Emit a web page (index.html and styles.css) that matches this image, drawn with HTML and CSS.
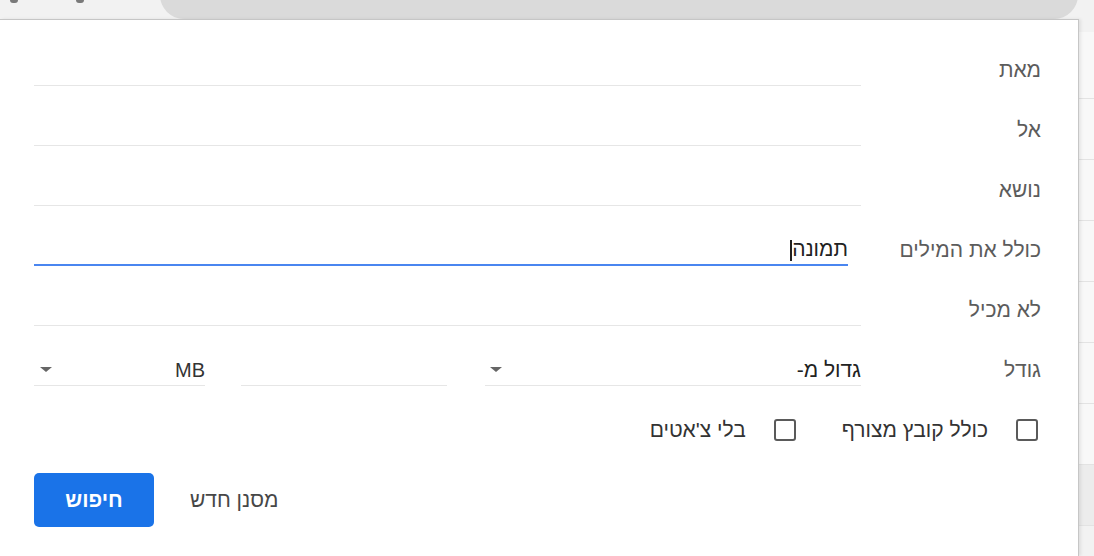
FILE: index.html
```html
<!DOCTYPE html>
<html lang="he">
<head>
    <meta charset="UTF-8">
    <meta name="viewport" content="width=device-width, initial-scale=1.0">
    <title>חיפוש מתקדם</title>
    <link rel="stylesheet" href="styles.css">
</head>
<body>

    <div class="topbar">
        <span class="tb-icon first"></span>
        <span class="tb-icon second"></span>
        <div class="search-pill"></div>
    </div>

    <div class="main">
        <div class="dialog">
            <form class="filter-form" dir="rtl">
                <div class="row">
                    <label class="label">מאת</label>
                    <div class="field"></div>
                </div>
                <div class="row">
                    <label class="label">אל</label>
                    <div class="field"></div>
                </div>
                <div class="row">
                    <label class="label">נושא</label>
                    <div class="field"></div>
                </div>
                <div class="row">
                    <label class="label">כולל את המילים</label>
                    <div class="field focused"><span class="value">תמונה</span><span class="caret"></span></div>
                </div>
                <div class="row">
                    <label class="label">לא מכיל</label>
                    <div class="field"></div>
                </div>
                <div class="row">
                    <label class="label">גודל</label>
                    <div class="size-fields">
                        <div class="field select wide"><span class="value">גדול מ-</span><span class="arrow"></span></div>
                        <div class="field number"></div>
                        <div class="field select unit"><span class="value latin">MB</span><span class="arrow"></span></div>
                    </div>
                </div>
                <div class="row checks">
                    <label class="check"><span class="box"></span><span>כולל קובץ מצורף</span></label>
                    <label class="check"><span class="box"></span><span>בלי צ'אטים</span></label>
                </div>
                <div class="row actions">
                    <span class="new-filter">מסנן חדש</span>
                    <button type="button" class="search-btn">חיפוש</button>
                </div>
            </form>
        </div>

        <div class="side">
            <div class="side-row first"></div>
            <div class="side-row"></div>
            <div class="side-row"></div>
            <div class="side-row"></div>
            <div class="side-row"></div>
            <div class="side-row"></div>
            <div class="side-row"></div>
            <div class="side-row grey"></div>
        </div>
    </div>

</body>
</html>
```

FILE: styles.css
```css
* { margin: 0; padding: 0; box-sizing: border-box; }
body {
    font-family: "Liberation Sans", Arial, sans-serif;
    background: #f2f2f2;
    overflow: hidden;
    width: 1094px;
    height: 556px;
}

/* top strip with the search pill that the dialog covers */
.topbar {
    display: flex;
    align-items: flex-end;
    height: 19px;
    overflow: hidden;
}
.tb-icon {
    align-self: flex-start;
    width: 8px;
    height: 3px;
    background: #7a7a7a;
    border-radius: 0 0 3px 3px;
}
.tb-icon.first { margin-left: 10px; }
.tb-icon.second { margin-left: 58px; }
.search-pill {
    flex: 0 0 918px;
    height: 48px;
    margin-left: 76px;
    background: #dadada;
    border-radius: 28px;
}

.main { display: flex; height: 537px; }

.dialog {
    flex: 0 0 1079px;
    background: #fff;
    border-top: 1px solid #c6c6c6;
    border-right: 1px solid #c6c6c6;
    box-shadow: 2px 0 3px rgba(0, 0, 0, 0.08);
    padding: 20px 37px 0 34px;
    position: relative;
}

.row {
    display: grid;
    grid-template-columns: 180px 1fr;
    align-items: center;
    height: 60px;
}
.label { font-size: 21px; color: #5c5c5c; }

.field {
    display: flex;
    align-items: center;
    height: 32px;
    border-bottom: 1px solid #e6e6e6;
    font-size: 21px;
    color: #222;
}
.field.focused {
    margin-right: 13px;
    border-bottom: 2px solid #4a86f0;
}
.caret {
    width: 2px;
    height: 21px;
    background: #222;
    margin-top: 2px;
}

.size-fields { display: flex; }
.field.wide { width: 376px; }
.field.number { width: 206px; margin-right: 38px; }
.field.unit { width: 171px; margin-right: 36px; }
.select { justify-content: space-between; }
.select .value { padding-top: 1px; }
.select .latin { font-size: 20px; color: #333; }
.arrow {
    width: 0;
    height: 0;
    border-left: 6px solid transparent;
    border-right: 6px solid transparent;
    border-top: 5px solid #666;
    margin-left: 6px;
}
.field.wide .arrow { margin-left: 5px; }

.row.checks {
    display: flex;
    padding-right: 3px;
    gap: 46px;
}
.check {
    display: flex;
    align-items: center;
    gap: 28px;
    font-size: 21px;
    color: #333;
}
.box {
    width: 22px;
    height: 22px;
    border: 2px solid #5a5a5a;
    border-radius: 3px;
}

.row.actions {
    display: flex;
    justify-content: flex-end;
    align-items: center;
    gap: 36px;
    height: 80px;
}
.new-filter { font-size: 21px; color: #474747; }
.search-btn {
    width: 120px;
    height: 54px;
    border: none;
    border-radius: 5px;
    background: #1a73e8;
    color: #fff;
    font-family: inherit;
    font-size: 21px;
    font-weight: bold;
    cursor: pointer;
}

/* list rows peeking out to the right of the dialog */
.side {
    flex: 1;
    padding-top: 13px;
}
.side-row {
    height: 61px;
    background: #f8f8f8;
    border-bottom: 1px solid #e3e3e3;
}
.side-row.first { height: 67px; }
.side-row.grey { background: #ececec; }
```
